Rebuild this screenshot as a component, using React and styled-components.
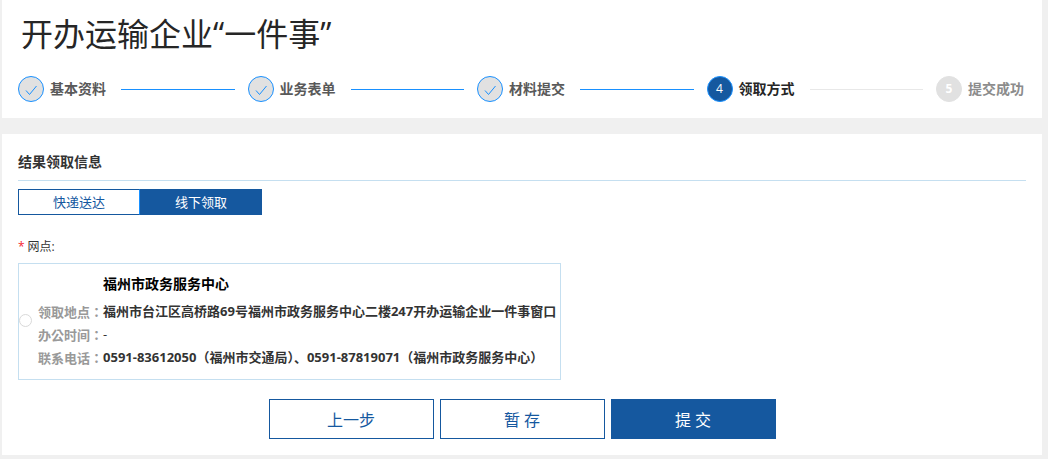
import React, { useState } from "react";
import styled, { createGlobalStyle } from "styled-components";

const GlobalStyle = createGlobalStyle`
  * {
    box-sizing: border-box;
  }

  body {
    margin: 0;
    background: #f0f0f0;
    color: #333;
    font-family: "Open Sans", "Noto Sans CJK SC", sans-serif;
    font-size: 13px;
  }

  button {
    font-family: inherit;
    cursor: pointer;
  }
`;

// Page
const Page = styled.main`
  display: flex;
  flex-direction: column;
  gap: 16px;
  padding: 0 6px 4px 2px;
`;

const Panel = styled.section`
  padding: 16px;
  background: #fff;
`;

const Title = styled.h1`
  margin: -6px 0 18px;
  padding-left: 3px;
  color: #262626;
  font-size: 32px;
  font-weight: 400;
  line-height: 48px;
`;

// Progress steps
const Steps = styled.ol`
  display: flex;
  gap: 13px;
  margin: 0;
  padding: 0;
  list-style: none;
`;

const Step = styled.li`
  display: flex;
  flex: 1;
  align-items: center;
  color: ${(props) => props.$color};
  font-size: 14px;
  font-weight: 700;
  line-height: 26px;

  &:last-child {
    flex: none;
  }

  &:not(:last-child)::after {
    content: "";
    flex: 1;
    height: 1px;
    background: ${(props) => (props.$status === "finish" ? "#1890ff" : "#e8e8e8")};
  }
`;

const circleColors = {
  finish: { background: "#e1e1e1", border: "#1890ff", color: "#1890ff" },
  process: { background: "#15589f", border: "#1890ff", color: "#fff" },
  wait: { background: "#e1e1e1", border: "#e1e1e1", color: "#fff" }
};

const StepCircle = styled.span`
  display: flex;
  align-items: center;
  justify-content: center;
  width: 26px;
  height: 26px;
  margin-right: 6px;
  border: 1px solid ${(props) => circleColors[props.$status].border};
  border-radius: 50%;
  background: ${(props) => circleColors[props.$status].background};
  color: ${(props) => circleColors[props.$status].color};
  font-size: 12px;
  font-weight: ${(props) => (props.$status === "wait" ? 700 : 400)};
`;

const StepLabel = styled.span`
  min-width: 58px;
  margin-right: ${(props) => (props.$last ? 0 : 13)}px;
`;

// Section heading
const SectionTitle = styled.h2`
  margin: 0 0 8px;
  padding-bottom: 6px;
  border-bottom: 1px solid #c5dff0;
  font-size: 14px;
  font-weight: 700;
  line-height: 24px;
`;

// Tabs
const Tabs = styled.div`
  display: flex;
  margin-bottom: 22px;
`;

const Tab = styled.button`
  width: 122px;
  height: 26px;
  padding: 0;
  border: 1px solid #15589f;
  background: ${(props) => (props.$active ? "#15589f" : "#fff")};
  color: ${(props) => (props.$active ? "#fff" : "#15589f")};
  font-size: 13px;
  line-height: 24px;

  &:first-child {
    border-right-color: #1890ff;
  }
`;

// Service point
const FieldSet = styled.fieldset`
  min-width: 0;
  margin: 0;
  padding: 0;
  border: 0;
`;

const FieldName = styled.legend`
  margin-bottom: 6px;
  padding: 0;
  font-size: 12px;
  line-height: 20px;
`;

const Required = styled.span`
  margin-right: 3px;
  color: #f5222d;
`;

const PointCard = styled.label`
  display: flex;
  align-items: center;
  gap: 6px;
  width: fit-content;
  padding: 8px 4px 10px 0;
  border: 1px solid #c5dff0;
  cursor: pointer;
`;

const Radio = styled.input`
  flex: none;
  width: 13px;
  height: 13px;
  margin: 0;
  border: 1px solid #d9d9d9;
  border-radius: 50%;
  background: #fff;
  appearance: none;

  &:checked {
    border: 4px solid #15589f;
  }
`;

const PointInfo = styled.span`
  display: grid;
  grid-template-columns: auto 1fr;
  line-height: 23px;
`;

const PointName = styled.strong`
  grid-column: 2;
  margin-bottom: 5px;
  color: #000;
  font-size: 14px;
`;

// The TC face sets the full-width colon in the middle of its cell
const InfoLabel = styled.span`
  color: #999;
  font-family: "Noto Sans CJK TC", sans-serif;
  font-weight: 700;
`;

const InfoValue = styled.span`
  font-weight: ${(props) => (props.$plain ? 400 : 700)};
`;

// Bottom buttons
const Actions = styled.div`
  display: flex;
  justify-content: center;
  gap: 6px;
  margin-top: 19px;
`;

const ActionButton = styled.button`
  width: 165px;
  height: 40px;
  padding: 0;
  border: 1px solid #15589f;
  background: ${(props) => (props.$primary ? "#15589f" : "#fff")};
  color: ${(props) => (props.$primary ? "#fff" : "#15589f")};
  font-size: 16px;
`;

const steps = [
  { label: "基本资料", status: "finish", color: "#595959" },
  { label: "业务表单", status: "finish", color: "#595959" },
  { label: "材料提交", status: "finish", color: "#595959" },
  { label: "领取方式", status: "process", color: "#262626" },
  { label: "提交成功", status: "wait", color: "#8c8c8c" }
];

const tabs = ["快递送达", "线下领取"];

const point = {
  name: "福州市政务服务中心",
  rows: [
    { label: "领取地点：", value: "福州市台江区高桥路69号福州市政务服务中心二楼247开办运输企业一件事窗口" },
    { label: "办公时间：", value: "-" },
    { label: "联系电话：", value: "0591-83612050（福州市交通局）、0591-87819071（福州市政务服务中心）" }
  ]
};

const CheckIcon = () => (
  <svg width="14" height="14" viewBox="0 0 14 14" fill="none" aria-hidden="true">
    <path d="M2 8.5 L5.5 12.5 L12.5 4" stroke="currentColor" />
  </svg>
);

const App = () => {
  const [activeTab, setActiveTab] = useState("线下领取");
  const [selected, setSelected] = useState(false);

  return (
    <>
      <GlobalStyle />
      <Page>
        <Panel>
          <Title>开办运输企业“一件事”</Title>
          <Steps>
            {steps.map((step, index) => (
              <Step key={step.label} $status={step.status} $color={step.color}>
                <StepCircle $status={step.status}>
                  {step.status === "finish" ? <CheckIcon /> : index + 1}
                </StepCircle>
                <StepLabel $last={index === steps.length - 1}>{step.label}</StepLabel>
              </Step>
            ))}
          </Steps>
        </Panel>

        <Panel>
          <SectionTitle>结果领取信息</SectionTitle>
          <Tabs>
            {tabs.map((tab) => (
              <Tab key={tab} type="button" $active={tab === activeTab} onClick={() => setActiveTab(tab)}>
                {tab}
              </Tab>
            ))}
          </Tabs>

          <FieldSet>
            <FieldName>
              <Required>*</Required>网点:
            </FieldName>
            <PointCard>
              <Radio type="radio" name="point" checked={selected} onChange={() => setSelected(true)} />
              <PointInfo>
                <PointName>{point.name}</PointName>
                {point.rows.map((row) => (
                  <React.Fragment key={row.label}>
                    <InfoLabel>{row.label}</InfoLabel>
                    <InfoValue $plain={row.value === "-"}>{row.value}</InfoValue>
                  </React.Fragment>
                ))}
              </PointInfo>
            </PointCard>
          </FieldSet>

          <Actions>
            <ActionButton type="button">上一步</ActionButton>
            <ActionButton type="button">暂 存</ActionButton>
            <ActionButton type="button" $primary>提 交</ActionButton>
          </Actions>
        </Panel>
      </Page>
    </>
  );
};

export default App;
